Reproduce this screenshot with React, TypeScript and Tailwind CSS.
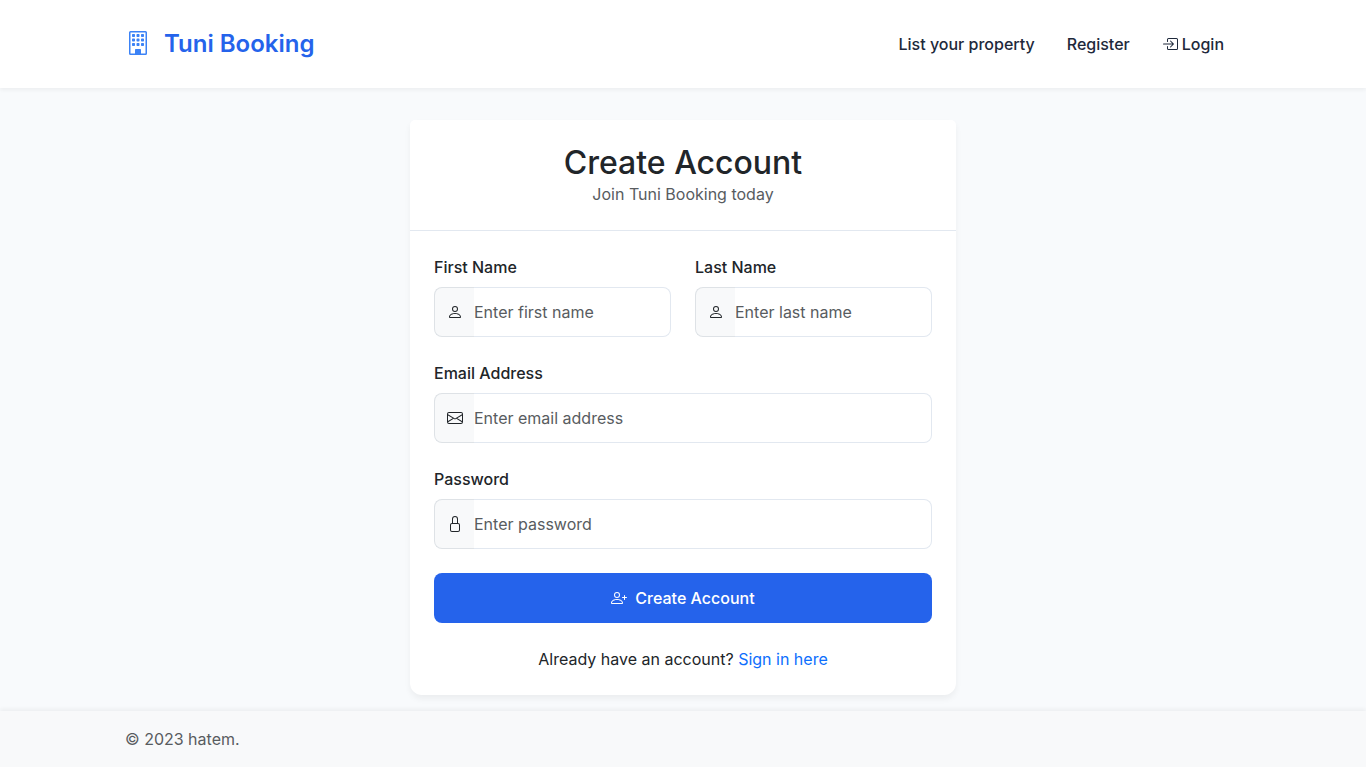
import type { ReactNode } from "react";
import {
  BsBoxArrowInRight,
  BsBuilding,
  BsEnvelope,
  BsLock,
  BsPerson,
  BsPersonPlus,
} from "react-icons/bs";

type FieldProps = {
  id: string;
  label: string;
  type: string;
  placeholder: string;
  icon: ReactNode;
};

function Field({ id, label, type, placeholder, icon }: FieldProps) {
  return (
    <div className="min-w-0 flex-1">
      <label htmlFor={id} className="mb-2 block font-medium">
        {label}
      </label>
      <div className="flex h-[50px]">
        <span className="flex w-10 shrink-0 items-center rounded-l-lg border border-r-0 border-[#dee2e6] bg-[#f8f9fa] pl-3">
          {icon}
        </span>
        <input
          id={id}
          type={type}
          placeholder={placeholder}
          className="min-w-0 flex-1 rounded-r-lg border border-l-0 border-[#e2e8f0] bg-white pr-4 outline-none placeholder:text-[#585c5f]"
        />
      </div>
    </div>
  );
}

function Header() {
  return (
    <header className="relative bg-white shadow-[0_2px_4px_rgba(0,0,0,0.05)]">
      <div className="mx-auto flex h-[88px] max-w-[1138px] items-center justify-between pr-4 pl-3">
        <a href="#" className="flex items-center text-2xl font-semibold text-[#2563eb]">
          <BsBuilding className="mr-3.5 mb-0.5 size-6 text-[#3b82f6]" />
          Tuni Booking
        </a>
        <nav className="flex gap-8 pr-3 font-medium text-[#1e293b]">
          <a href="#">List your property</a>
          <a href="#">Register</a>
          <a href="#" className="flex items-center gap-1">
            <BsBoxArrowInRight />
            Login
          </a>
        </nav>
      </div>
    </header>
  );
}

export default function App() {
  return (
    <div className="flex min-h-screen flex-col bg-[#f8fafc] font-['Inter',sans-serif] text-base text-[#212529]">
      <Header />
      <main className="mx-auto w-full max-w-[546px] flex-1 pt-8 pb-4">
        <section className="rounded-t-[5px] rounded-b-xl bg-white shadow-[0_4px_6px_rgba(0,0,0,0.05)]">
          <div className="border-b border-[#e2e8f0] p-6 text-center">
            <h1 className="text-[32px] leading-[38px] font-medium">Create Account</h1>
            <p className="text-[#585c5f]">Join Tuni Booking today</p>
          </div>
          <form className="flex flex-col gap-6 p-6">
            <div className="flex gap-6">
              <Field id="first-name" label="First Name" type="text" placeholder="Enter first name" icon={<BsPerson />} />
              <Field id="last-name" label="Last Name" type="text" placeholder="Enter last name" icon={<BsPerson />} />
            </div>
            <Field id="email" label="Email Address" type="email" placeholder="Enter email address" icon={<BsEnvelope />} />
            <Field id="password" label="Password" type="password" placeholder="Enter password" icon={<BsLock />} />
            <button
              type="submit"
              className="flex h-[50px] items-center justify-center gap-2 rounded-lg bg-[#2563eb] font-medium text-white"
            >
              <BsPersonPlus />
              Create Account
            </button>
            <p className="text-center">
              Already have an account?{" "}
              <a href="#" className="text-[#0d6efd]">
                Sign in here
              </a>
            </p>
          </form>
        </section>
      </main>
      <footer className="bg-[#f8f9fa] shadow-[0_-2px_4px_rgba(0,0,0,0.05)]">
        <div className="mx-auto max-w-[1140px] px-3 py-4 text-[#585c5f]">© 2023 hatem.</div>
      </footer>
    </div>
  );
}
